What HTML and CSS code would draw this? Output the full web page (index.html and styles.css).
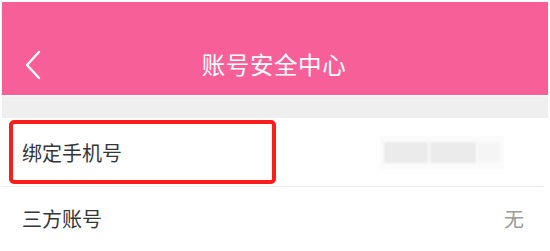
FILE: index.html
```html
<!DOCTYPE html>
<html lang="zh">
<head>
<meta charset="utf-8">
<link rel="stylesheet" href="styles.css">
</head>
<body>
<div class="page">
  <header class="nav">
    <svg class="back" width="18" height="30" viewBox="0 0 18 30"><path d="M15 2 L3 15 L15 28" fill="none" stroke="#fff" stroke-width="2.4" stroke-linecap="round" stroke-linejoin="round"/></svg>
    <div class="title">账号安全中心</div>
  </header>
  <div class="gap"></div>
  <div class="row first">
    <div class="label-box"><span class="label">绑定手机号</span></div>
    <div class="blur"><span class="blk"></span><span class="blk b2"></span><span class="blk b3"></span></div>
  </div>
  <div class="divider"></div>
  <div class="row second">
    <span class="label">三方账号</span>
    <span class="value">无</span>
  </div>
</div>
</body>
</html>
```
FILE: styles.css
```css
html, body { margin: 0; padding: 0; background: #fff; }
body { width: 550px; height: 251px; overflow: hidden; font-family: "Noto Sans CJK SC", "Noto Sans", sans-serif; }
.page { padding: 2px 2px 0 2px; }
.nav {
  height: 93px;
  background: #f75f99;
  position: relative;
  display: flex;
  align-items: center;
  justify-content: center;
}
.back { position: absolute; left: 22px; top: 48px; }
.title { color: #fff; font-size: 23.5px; margin-top: 30px; letter-spacing: 0.6px; margin-left: -2px; }
.gap { height: 21px; background: #efefef; margin-top: 1px; border-top: 1px solid #f4f4f4; }
.row { display: flex; align-items: center; justify-content: space-between; }
.first { height: 68px; }
.label-box {
  margin-left: 7px;
  width: 250px;
  height: 56px;
  border: 4px solid #fd1c1c;
  border-radius: 5px;
  display: flex;
  align-items: center;
  padding-left: 9px;
  box-sizing: content-box;
}
.label { font-size: 20px; color: #363636; }
.blur { display: flex; margin-right: 44px; padding: 6px 4px; background: #fbfbfb; gap: 2px; }
.blk { width: 44px; height: 21px; background: #ebebeb; display: block; filter: blur(1px); }
.b2 { width: 46px; }
.b3 { width: 22px; background: #f5f5f5; }
.divider { height: 1px; background: #ececec; margin-right: 5px; }
.second { height: 62px; padding-left: 20px; padding-right: 24px; }
.value { font-size: 20px; color: #9a9a9a; }
```
